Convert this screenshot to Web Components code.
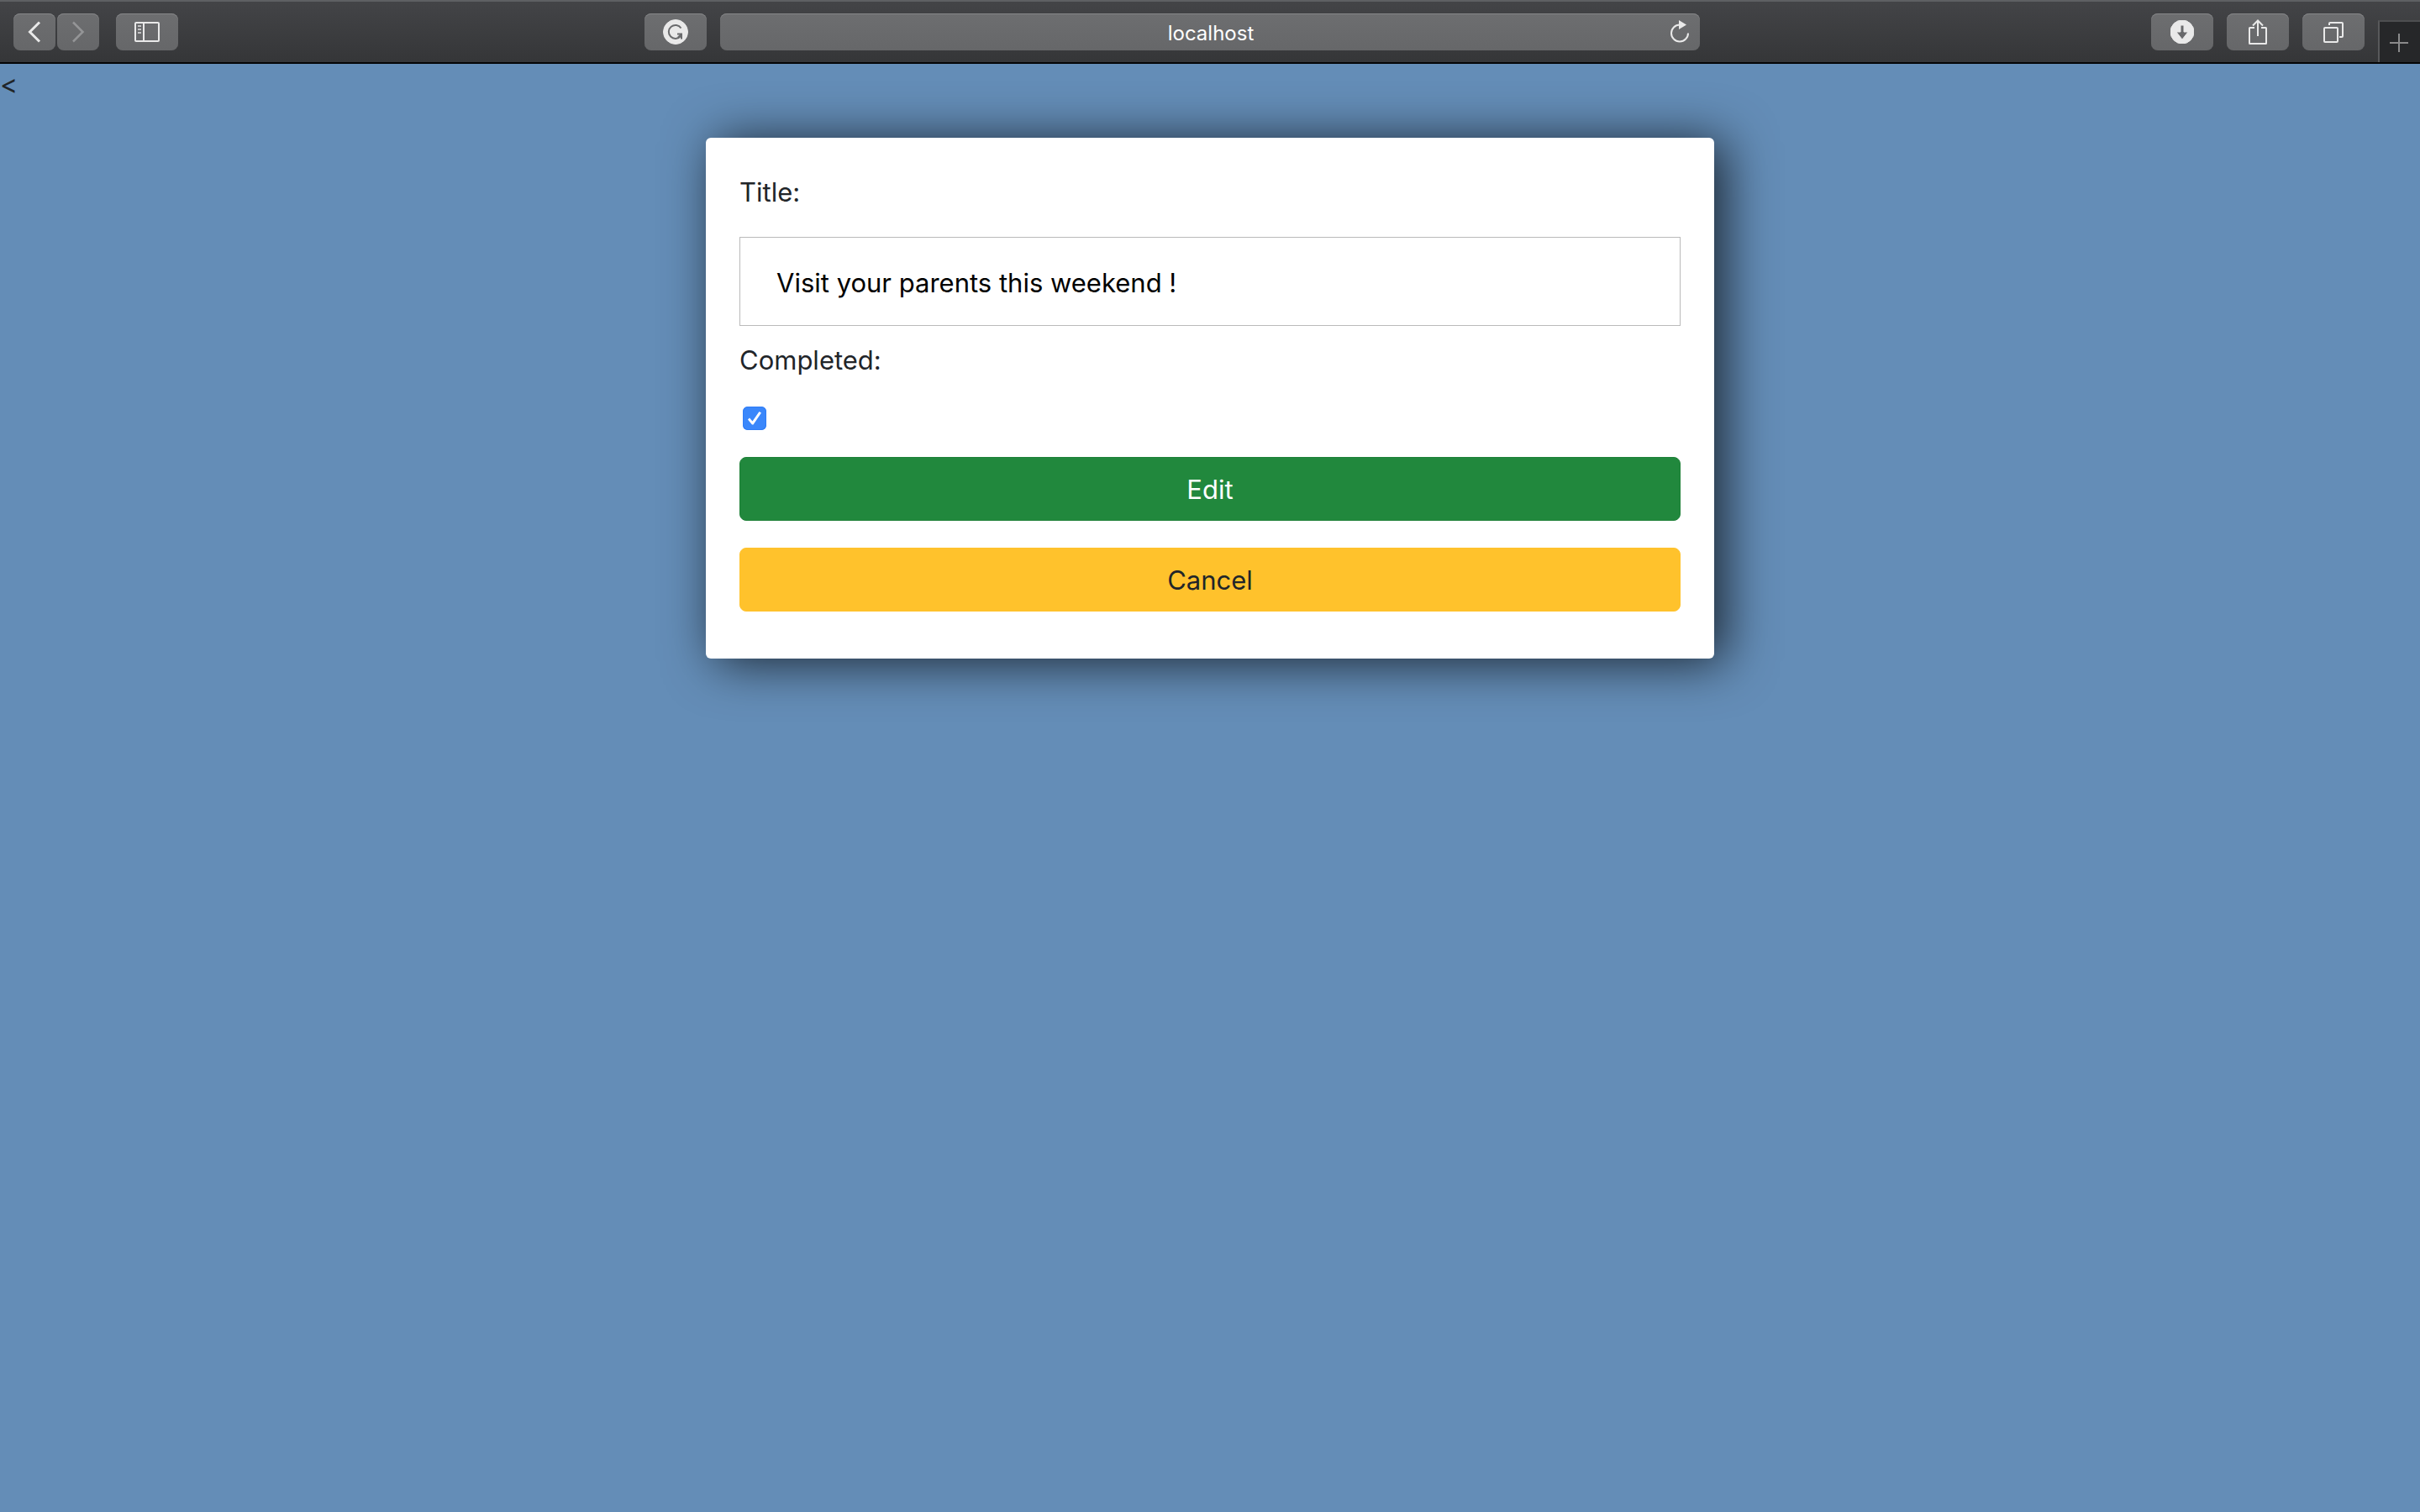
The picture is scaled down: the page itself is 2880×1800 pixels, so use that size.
<!DOCTYPE html>
<html lang="en">
<head>
<meta charset="utf-8">
<title>Edit todo</title>
<style>
  html, body { height: 100%; }
  body {
    margin: 0;
    background: #648db7;
    color: #212529;
    font: 32px/50px Inter, "Liberation Sans", sans-serif;
  }
</style>
</head>
<body>
<todo-app></todo-app>

<template id="tool-button-tpl">
  <style>
    :host { display: block; flex: none; width: 74px; height: 44px; }
    :host([narrow]) { width: 50px; }
    button {
      display: grid; place-items: center; width: 100%; height: 100%;
      margin: 0; padding: 0; border: 0; border-radius: 8px;
      background: linear-gradient(#6d6e70, #666769);
      box-shadow: inset 0 1px #858688;
      color: #e9e9e9;
    }
    button:disabled { color: #949597; }
    ::slotted(svg) { display: block; fill: none; stroke: currentColor; }
  </style>
  <button type="button"><slot></slot></button>
</template>

<template id="browser-bar-tpl">
  <style>
    :host {
      display: grid; box-sizing: border-box; height: 76px;
      grid-template-columns: minmax(0, 1fr) minmax(0, 1166px) minmax(0, 1fr);
      align-items: center;
      background: linear-gradient(#434447, #353638);
      border-top: 2px solid #5e6063; border-bottom: 2px solid #050505;
    }
    .left, .right, .group { display: flex; align-items: center; }
    .left { gap: 20px; padding: 0 16px; }
    .left .last { margin-left: auto; }
    .group { gap: 2px; }
    .right { justify-content: flex-end; gap: 16px; height: 100%; }
    .address {
      display: grid; grid-template-columns: 48px minmax(0, 1fr) 48px; align-items: center;
      height: 44px; border-radius: 8px;
      background: linear-gradient(#6d6e70, #666769);
      box-shadow: inset 0 1px #858688;
    }
    input {
      grid-column: 2; width: 100%; height: 44px; box-sizing: border-box; margin: 0; padding: 2px 0 0 2px;
      border: 0; outline: 0; background: none; color: #fff;
      font: 24px/42px Inter, "Liberation Sans", sans-serif; text-align: center;
    }
    .reload { width: 48px; height: 44px; border: 0; padding: 0; background: none; color: #e9e9e9; display: grid; place-items: center; }
    .new-tab {
      align-self: flex-end; width: 50px; height: 50px; padding: 2px 2px 0 0; display: grid; place-items: center;
      background: #262729; color: #8a8a8b;
      border: 0; border-top: 2px solid #4d4e50; border-left: 2px solid #58595b;
    }
    svg { display: block; fill: none; stroke: currentColor; }
  </style>
  <div class="left">
    <div class="group">
      <tool-button narrow label="Back"><svg width="16" height="26" viewBox="0 0 16 26" stroke-width="3"><path d="M14 1.500 2.500 13 14 24.500"/></svg></tool-button>
      <tool-button narrow disabled label="Forward"><svg width="16" height="26" viewBox="0 0 16 26" stroke-width="2.500"><path d="M2 1.500 13.500 13 2 24.500"/></svg></tool-button>
    </div>
    <tool-button label="Show sidebar"><svg width="30" height="24" viewBox="0 0 30 24" stroke-width="2"><rect x="1" y="1" width="28" height="22" rx="1"/><path d="M11 1v22"/><path d="M4 5h4M4 9h4M4 13h4" stroke="#c4c4c5"/></svg></tool-button>
    <tool-button class="last" label="Grammarly"><svg width="30" height="30" viewBox="0 0 30 30" stroke="none"><circle cx="15" cy="15" r="14.500" fill="#e9e9e9"/><path d="M21.500 10.500A8 8 0 1 0 21 20" fill="none" stroke="#6a6b6d" stroke-width="2"/><path d="M17 17.500h5v6" fill="none" stroke="#6a6b6d" stroke-width="2"/><path d="M22 17.500 18 21.500" stroke="#6a6b6d" stroke-width="2"/></svg></tool-button>
  </div>
  <div class="address">
    <input type="text" value="localhost" aria-label="Address">
    <button class="reload" type="button" aria-label="Reload"><svg width="24" height="28" viewBox="0 0 24 28" stroke-width="2"><path d="M12 5.500A10 10 0 1 0 22 15.500"/><path d="M11 0v11L20 5.500z" fill="currentColor" stroke="none"/></svg></button>
  </div>
  <div class="right">
    <tool-button label="Downloads"><svg width="28" height="28" viewBox="0 0 28 28" stroke="none"><circle cx="14" cy="14" r="14" fill="#e9e9e9"/><path d="M12 6h4v8h5l-7 9-7-9h5z" fill="#68696b"/></svg></tool-button>
    <tool-button label="Share"><svg width="24" height="32" viewBox="0 0 24 32" stroke-width="2"><path d="M8 11H2.500Q2 11 2 11.500v18q0 .500.500.500h19q.500 0 .500-.500v-18q0-.500-.500-.500h-5.500M12 21V2.500M6 8.500l6-6 6 6"/></svg></tool-button>
    <tool-button label="Tab overview"><svg width="24" height="26" viewBox="0 0 24 26" stroke-width="2"><rect x="1" y="8" width="16" height="17" rx="1"/><path d="M7 5V3q0-1 1-1h14q1 0 1 1v15q0 1-1 1h-3"/></svg></tool-button>
    <button class="new-tab" type="button" aria-label="New tab"><svg width="22" height="22" viewBox="0 0 22 22" stroke-width="2"><path d="M11 0v22M0 11h22"/></svg></button>
  </div>
</template>

<template id="todo-form-tpl">
  <style>
    :host {
      display: block; box-sizing: border-box; width: calc(100% - 32px); max-width: 1200px;
      margin: 38px auto 0; padding: 40px 40px 56px;
      background: #fff; border-radius: 6px;
      box-shadow: 12px 4px 60px rgba(0, 0, 0, .75);
    }
    form { display: flex; flex-direction: column; }
    label { font-size: 31px; }
    .title {
      box-sizing: border-box; width: 100%; height: 106px; margin: 28px 0 16px; padding: 2px 43px 0;
      border: 1px solid #bababa; border-radius: 0; outline: 0; background: #fff; color: #000;
      font: 31px/50px Inter, "Liberation Sans", sans-serif;
    }
    .done {
      appearance: none; width: 28px; height: 28px; margin: 30px 4px 32px; border-radius: 6px;
      background: #3a87fb; box-shadow: inset 0 0 0 1px #2f7df6;
      display: grid; place-items: center;
    }
    .done:checked::before {
      content: ""; width: 16px; height: 16px; background: #fff;
      clip-path: path("M0 9.500 2 7.500 5.500 11.500 13.500 0 16 1.500 6.500 15.500 5 15.500Z");
    }
    .actions { display: grid; gap: 32px; }
    .actions button {
      height: 76px; padding: 2px 0 0; border: 1px solid #1f8139; border-radius: 8px;
      background: #21883d; color: #fff; font: 31px/50px Inter, "Liberation Sans", sans-serif;
    }
    .actions .cancel { background: #ffc22c; border-color: #ffc22c; color: #212529; }
  </style>
  <form>
    <label for="title">Title:</label>
    <input class="title" id="title" type="text" value="Visit your parents this weekend !">
    <label for="done">Completed:</label>
    <input class="done" id="done" type="checkbox" checked>
    <div class="actions">
      <button type="button">Edit</button>
      <button class="cancel" type="button">Cancel</button>
    </div>
  </form>
</template>

<template id="todo-app-tpl">
  <style>
    :host { display: block; }
    main { display: flow-root; }
  </style>
  <browser-bar></browser-bar>
  <main>&lt;<todo-form></todo-form></main>
</template>

<script>
  class TemplateElement extends HTMLElement {
    constructor() {
      super();
      const tpl = document.getElementById(this.localName + "-tpl");
      this.attachShadow({ mode: "open" }).append(tpl.content.cloneNode(true));
    }
  }
  customElements.define("tool-button", class extends TemplateElement {
    connectedCallback() {
      const button = this.shadowRoot.querySelector("button");
      button.setAttribute("aria-label", this.getAttribute("label"));
      button.disabled = this.hasAttribute("disabled");
    }
  });
  customElements.define("browser-bar", class extends TemplateElement {});
  customElements.define("todo-form", class extends TemplateElement {});
  customElements.define("todo-app", class extends TemplateElement {});
</script>
</body>
</html>
